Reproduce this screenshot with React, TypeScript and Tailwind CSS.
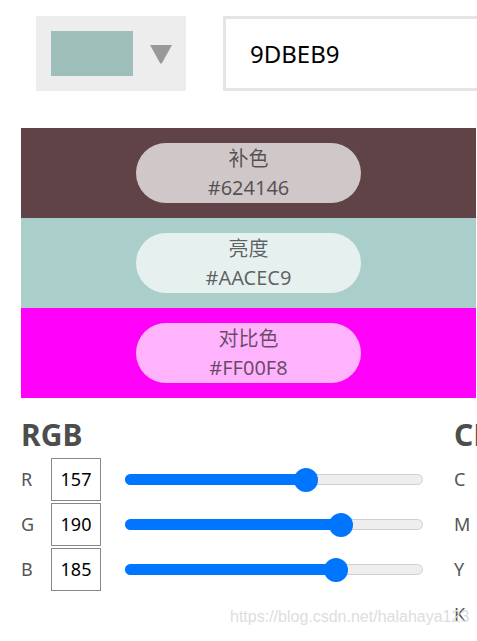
import React from "react";

const bands = [
  { name: "补色", hex: "#624146", bg: "bg-[#604347]" },
  { name: "亮度", hex: "#AACEC9", bg: "bg-[#aacec9]" },
  { name: "对比色", hex: "#FF00F8", bg: "bg-[#ff00f8]" },
];

const rgb = [
  { label: "R", value: 157 },
  { label: "G", value: 190 },
  { label: "B", value: 185 },
];

const Slider = ({ value }: { value: number }) => {
  const pos = (value / 255) * (298 - 24) + 12;
  return (
    <div className="relative w-[298px] h-[24px] flex items-center">
      <div className="w-full h-[11px] rounded-full bg-[#eeeeee] border border-[#cfcfcf]" />
      <div
        className="absolute left-0 h-[11px] rounded-full bg-[#0075ff]"
        style={{ width: pos }}
      />
      <div
        className="absolute top-0 w-[24px] h-[24px] rounded-full bg-[#0075ff]"
        style={{ left: pos - 12 }}
      />
    </div>
  );
};

export default function App() {
  return (
    <div className="relative w-[477px] h-[641px] overflow-hidden bg-white font-['Noto_Sans','Noto_Sans_CJK_SC',sans-serif]">
      {/* top: swatch picker + hex input */}
      <div className="flex pt-4 pl-[36px] gap-[37px]">
        <div className="w-[150px] h-[75px] shrink-0 bg-[#ededed] flex items-center pl-[15px]">
          <div className="w-[82px] h-[45px] bg-[#9dbeb9]" />
          <svg width="24" height="20" viewBox="0 0 24 20" className="ml-[16px]">
            <path d="M1 1 H23 L13 19 Q12 20.5 11 19 Z" fill="#999" />
          </svg>
        </div>
        <div className="w-[300px] h-[75px] shrink-0 border-[3px] border-[#e4e4e4] flex items-center pl-[24px] text-[24px] text-black">
          9DBEB9
        </div>
      </div>

      {/* colour bands */}
      <div className="mt-[37px] ml-[21px] w-[455px]">
        {bands.map((b) => (
          <div key={b.hex} className={`h-[90px] flex items-center justify-center ${b.bg}`}>
            <div className="w-[225px] h-[60px] rounded-full bg-white/70 flex flex-col items-center justify-center text-[20px] leading-[29px] text-black/60">
              <span>{b.name}</span>
              <span>{b.hex}</span>
            </div>
          </div>
        ))}
      </div>

      {/* RGB / CMYK */}
      <div className="flex mt-[17px] ml-[21px]">
        <div className="w-[412px] shrink-0">
          <h2 className="text-[30px] leading-[40px] font-bold text-[#4d4d4d]">RGB</h2>
          <div className="mt-[3px] flex flex-col gap-[2px]">
            {rgb.map((c) => (
              <div key={c.label} className="flex items-center h-[43px]">
                <span className="w-[30px] text-[18px] text-[#555]">{c.label}</span>
                <div className="w-[50px] h-[43px] border border-[#888] flex items-center justify-center text-[18px] text-black">
                  {c.value}
                </div>
                <div className="ml-[24px]">
                  <Slider value={c.value} />
                </div>
              </div>
            ))}
          </div>
        </div>
        <div className="ml-[21px] shrink-0 w-[200px]">
          <h2 className="text-[30px] leading-[40px] font-bold text-[#4d4d4d]">CMYK</h2>
          <div className="mt-[3px] flex flex-col gap-[2px]">
            {["C", "M", "Y", "K"].map((l) => (
              <div key={l} className="h-[43px] flex items-center text-[18px] text-[#555]">
                {l}
              </div>
            ))}
          </div>
        </div>
      </div>

      {/* watermark */}
      <div className="absolute left-[230px] top-[605px] text-[16px] text-[#dddddd] font-['Liberation_Sans',sans-serif] pointer-events-none">
        https://blog.csdn.net/halahaya123
      </div>
    </div>
  );
}
